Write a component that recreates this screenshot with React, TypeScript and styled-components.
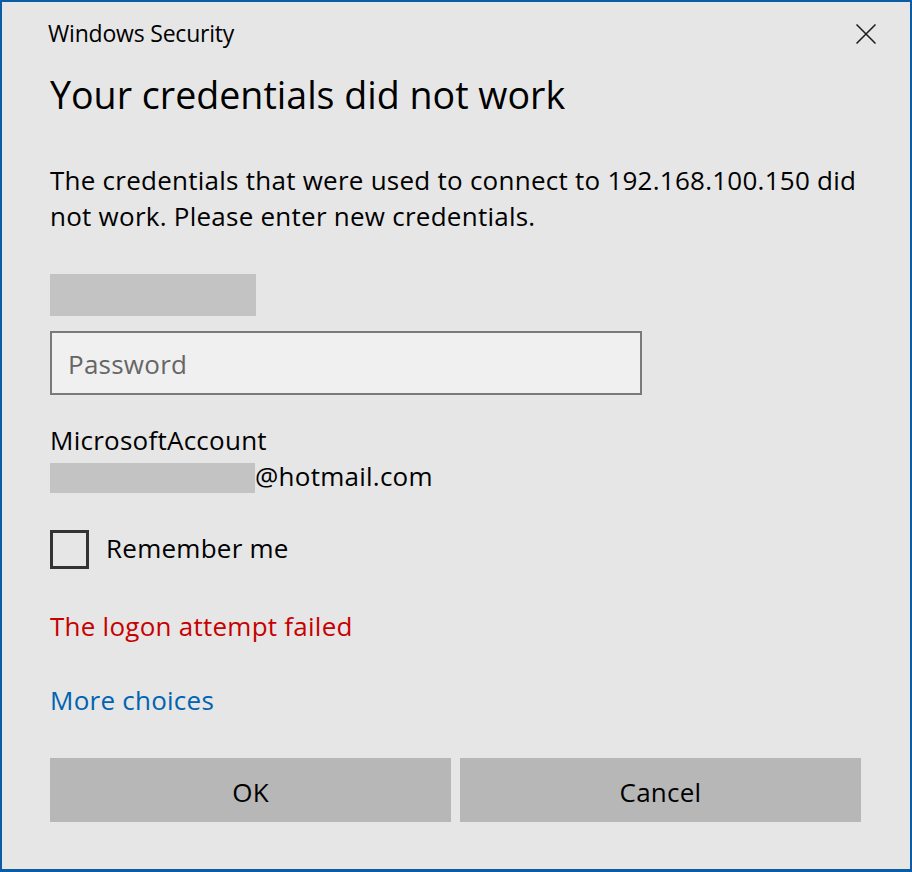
import React from "react";
import styled, { createGlobalStyle } from "styled-components";

const Global = createGlobalStyle`
  html, body { margin: 0; padding: 0; background: #e6e6e6; }
  * { box-sizing: border-box; }
`;

const FONT = `"Segoe UI", "Open Sans", "Noto Sans", sans-serif`;

const Window = styled.div`
  width: 912px;
  height: 872px;
  border: 2px solid #0b5ca4;
  border-bottom-width: 3px;
  background: #e6e6e6;
  font-family: ${FONT};
  color: #000;
  display: flex;
  flex-direction: column;
  padding: 0 0 0 46px;
`;

const Header = styled.div`
  display: flex;
  justify-content: space-between;
  align-items: flex-start;
  height: 68px;
  padding-top: 16px;
`;

const Caption = styled.div`
  font-size: 23px;
  line-height: 30px;
  letter-spacing: -0.2px;
`;

const CloseButton = styled.button`
  width: 20px;
  height: 20px;
  margin: 6px 34px 0 0;
  border: none;
  background: transparent;
  display: flex;
  padding: 0;
`;

const Body = styled.div`
  display: flex;
  flex-direction: column;
  align-items: flex-start;
  padding-left: 2px;
`;

const Title = styled.h1`
  margin: 0;
  font-weight: 400;
  font-size: 37.6px;
  line-height: 50px;
  letter-spacing: 0;
`;

const Text = styled.div`
  font-size: 26px;
  line-height: 36px;
  letter-spacing: 0.25px;
`;

const Message = styled(Text)`
  margin-top: 42px;
  width: 820px;
`;

const Redacted = styled.div<{ $w: number; $h: number }>`
  width: ${(p) => p.$w}px;
  height: ${(p) => p.$h}px;
  background: #c3c3c3;
  flex: none;
`;

const UserBlock = styled.div`
  margin-top: 40px;
`;

const PasswordBox = styled(Text)`
  margin-top: 15px;
  width: 592px;
  height: 64px;
  border: 2px solid #7a7a7a;
  background: #f0f0f0;
  padding: 13px 0 0 16px;
  color: #666;
`;

const Account = styled(Text)`
  margin-top: 27px;
`;

const EmailRow = styled.div`
  display: flex;
  align-items: flex-start;
  height: 36px;
`;

const EmailRedacted = styled(Redacted)`
  margin-top: 5px;
`;

const CheckRow = styled.label`
  margin-top: 36px;
  display: flex;
  align-items: center;
  gap: 17px;
`;

const Box = styled.span`
  width: 39px;
  height: 39px;
  border: 3px solid #333;
  flex: none;
`;

const CheckLabel = styled(Text)`
  padding-bottom: 3px;
`;

const ErrorText = styled(Text)`
  margin-top: 39px;
  color: #c80000;
`;

const Link = styled.a`
  margin-top: 38px;
  color: #0063b1;
  font-size: 26px;
  line-height: 36px;
  letter-spacing: 0.25px;
  text-decoration: none;
`;

const Buttons = styled.div`
  margin-top: 40px;
  display: flex;
  gap: 9px;
`;

const Button = styled.button`
  width: 401px;
  height: 64px;
  border: none;
  background: #b7b7b7;
  font-family: ${FONT};
  font-size: 26px;
  line-height: 36px;
  letter-spacing: 0.25px;
  color: #000;
  padding: 3px 0 0;
`;

export default function App() {
  return (
    <>
      <Global />
      <Window>
        <Header>
          <Caption>Windows Security</Caption>
          <CloseButton aria-label="Close">
            <svg width="20" height="20" viewBox="0 0 20 20">
              <path d="M0.5 0.5 L19.5 19.5 M19.5 0.5 L0.5 19.5" stroke="#1a1a1a" strokeWidth="1.5" fill="none" />
            </svg>
          </CloseButton>
        </Header>
        <Body>
          <Title>Your credentials did not work</Title>
          <Message>
            The credentials that were used to connect to 192.168.100.150 did not work. Please enter new credentials.
          </Message>
          <UserBlock>
            <Redacted $w={206} $h={42} />
          </UserBlock>
          <PasswordBox>Password</PasswordBox>
          <Account>
            MicrosoftAccount
            <EmailRow>
              <EmailRedacted $w={205} $h={30} />
              <span>@hotmail.com</span>
            </EmailRow>
          </Account>
          <CheckRow>
            <Box />
            <CheckLabel>Remember me</CheckLabel>
          </CheckRow>
          <ErrorText>The logon attempt failed</ErrorText>
          <Link href="#">More choices</Link>
          <Buttons>
            <Button>OK</Button>
            <Button>Cancel</Button>
          </Buttons>
        </Body>
      </Window>
    </>
  );
}
